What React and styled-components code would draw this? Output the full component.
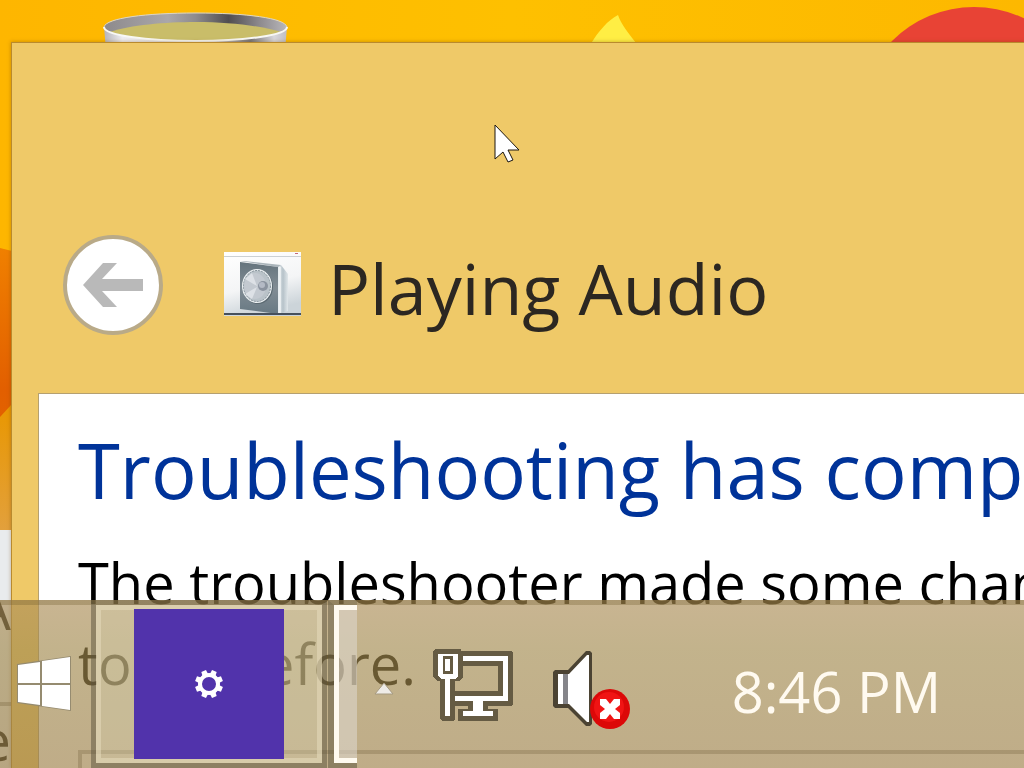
import React from "react";
import styled, { createGlobalStyle } from "styled-components";

const GlobalStyle = createGlobalStyle`
  * {
    box-sizing: border-box;
  }
  body {
    margin: 0;
    overflow: hidden;
    font-family: "Open Sans", "Noto Sans", sans-serif;
  }
  button {
    padding: 0;
    border: 0;
    background: none;
    cursor: pointer;
  }
  svg {
    display: block;
    flex: none;
  }
  h1, h2, p {
    margin: 0;
    font-weight: 400;
    white-space: nowrap;
  }
`;

const Desktop = styled.main`
  position: relative;
  display: flex;
  height: 100vh;
  padding: 42px 0 0 11px;
  overflow: hidden;
  background: linear-gradient(90deg, #feb600, #fec000 50%, #fdb800);
`;

const Wallpaper = styled.svg`
  position: absolute;
  top: 0;
  left: 0;
`;

/* the window that sits behind, only its right edge can be seen */
const BackWindow = styled.div`
  position: absolute;
  top: 530px;
  left: 0;
  bottom: 0;
  width: 11px;
  display: flex;
  flex-direction: column;
  align-items: flex-end;
  padding-top: 50px;
  overflow: hidden;
  font-size: 56px;
  line-height: 56px;
  color: #111;
  background: #e9ebed;
`;

const BackLine = styled.span`
  width: 100%;
  height: 4px;
  margin: 66px 0 5px;
  background: #aaa;
`;

const Window = styled.section`
  position: relative;
  flex: 1;
  min-width: 0;
  display: flex;
  flex-direction: column;
  padding-left: 26px;
  border: solid #b98a2e;
  border-width: 1px 0 0 1px;
  background: #efc968;
  box-shadow: 0 0 4px rgba(110, 70, 0, 0.4);
  overflow: hidden;
`;

const WindowHeader = styled.header`
  flex: none;
  display: flex;
  align-items: center;
  height: 350px;
  padding: 134px 0 0 24px;
`;

const BackButton = styled.button`
  width: 102px;
  height: 102px;
`;

const SpeakerPicture = styled.svg`
  margin: 0 26px 0 60px;
`;

const Title = styled.h1`
  padding-top: 6px;
  font-size: 70px;
  line-height: 100px;
  color: #2c2721;
`;

const Panel = styled.article`
  flex: 1;
  padding: 26px 0 0 39px;
  border: solid #b5a070;
  border-width: 1px 0 0 1px;
  background: #fff;
`;

const Heading = styled.h2`
  font-size: 76px;
  line-height: 100px;
  color: #003399;
`;

const Message = styled.p`
  padding-top: 22px;
  font-size: 56px;
  line-height: 81px;
  color: #000;
`;

const ResultList = styled.div`
  height: 100px;
  margin-top: 46px;
  border: solid #bbb;
  border-width: 4px 0 0 4px;
`;

const Taskbar = styled.footer`
  position: absolute;
  left: 0;
  right: 0;
  bottom: 0;
  display: flex;
  align-items: center;
  height: 168px;
  background: linear-gradient(
    rgba(172, 141, 87, 0.65),
    rgba(162, 138, 78, 0.65) 30%,
    rgba(157, 128, 72, 0.65)
  );
  box-shadow: inset 0 5px 0 rgba(110, 88, 40, 0.3);
`;

const StartButton = styled.button`
  flex: none;
  width: 91px;
  height: 100%;
  padding-left: 17px;
`;

const TaskButton = styled.button`
  flex: none;
  display: flex;
  width: ${(props) => (props.$cut ? "29px" : "236px")};
  height: 100%;
  margin-right: ${(props) => (props.$cut ? "0" : "1px")};
  border: solid rgba(92, 84, 62, 0.5);
  border-width: ${(props) => (props.$cut ? "5px 0 5px 6px" : "5px")};
  border-top-color: rgba(92, 84, 62, 0.3);
  background-clip: padding-box;
`;

const TaskFrame = styled.span`
  flex: 1;
  display: flex;
  align-items: center;
  justify-content: center;
  height: 100%;
  border: solid ${(props) => (props.$cut ? "#fffaf0" : "rgba(226, 216, 185, 0.7)")};
  border-width: ${(props) => (props.$cut ? "5px 0 5px 5px" : "5px")};
  background: ${(props) =>
    props.$cut ? "rgba(220, 214, 204, 0.6)" : "rgba(215, 210, 175, 0.35)"};
  background-clip: padding-box;
`;

const SettingsTile = styled.span`
  flex: none;
  display: flex;
  align-items: center;
  justify-content: center;
  width: 150px;
  height: 150px;
  background: #5133ab;
`;

const Tray = styled.div`
  display: flex;
  align-items: center;
  gap: 39px;
  padding-left: 17px;
`;

const Clock = styled.time`
  margin-left: auto;
  padding: 14px 83px 0 0;
  font-size: 56px;
  line-height: 80px;
  white-space: nowrap;
  color: #fffaf0;
`;

const Cursor = styled.svg`
  position: absolute;
  top: 124px;
  left: 494px;
`;

const WallpaperArt = () => (
  <Wallpaper width="1024" height="768" aria-hidden="true">
    <defs>
      <linearGradient id="rim">
        <stop offset="0" stopColor="#8d8a8c" />
        <stop offset="0.35" stopColor="#aaa7aa" />
        <stop offset="0.5" stopColor="#8e8b8d" />
        <stop offset="0.68" stopColor="#504d50" />
        <stop offset="0.85" stopColor="#8d8a8e" />
        <stop offset="1" stopColor="#b9b7ba" />
      </linearGradient>
      <linearGradient id="wall">
        <stop offset="0" stopColor="#b5b3b8" />
        <stop offset="0.1" stopColor="#eeedf0" />
        <stop offset="0.6" stopColor="#d5d3d6" />
        <stop offset="0.8" stopColor="#77757a" />
        <stop offset="0.93" stopColor="#d9d8dc" />
        <stop offset="1" stopColor="#bfbdc2" />
      </linearGradient>
      <linearGradient id="flame" x1="0" y1="0" x2="0" y2="1">
        <stop offset="0" stopColor="#f08000" />
        <stop offset="0.5" stopColor="#e25f00" />
        <stop offset="1" stopColor="#e46a00" />
      </linearGradient>
      <linearGradient id="sand" x1="0" y1="0" x2="0" y2="1">
        <stop offset="0" stopColor="#e99700" />
        <stop offset="1" stopColor="#e2a03c" />
      </linearGradient>
    </defs>
    <path d="M104 27 L106 50 H285 L287 27Z" fill="url(#wall)" />
    <ellipse cx="195.5" cy="27" rx="91.5" ry="14" fill="url(#rim)" />
    <path
      d="M110 32 C130 25 165 22 196 22 C230 22 262 26 281 32 C255 39 230 41 196 41 C160 41 130 38 110 32Z"
      fill="#c9bd69"
    />
    <path
      d="M104 27 C104 35 146 41 196 41 C246 41 287 35 287 27"
      fill="none"
      stroke="#f8f8f4"
      strokeWidth="2"
    />
    <path
      d="M104 27 C106 18 146 13 196 13 C246 13 285 18 287 27"
      fill="none"
      stroke="#dcd6c8"
      strokeWidth="1"
    />
    <path d="M592 42 C598 32 608 20 618 15 C621 24 629 34 636 43Z" fill="#ffee44" />
    <circle cx="974" cy="123" r="116" fill="#e84335" />
    <path d="M0 248 L12 251 V530 H0Z" fill="url(#flame)" />
    <path d="M0 417 L12 404 V530 H0Z" fill="url(#sand)" />
  </Wallpaper>
);

const BackArrow = () => (
  <svg width="102" height="102" aria-hidden="true">
    <circle cx="51" cy="51" r="48" fill="#fff" stroke="#b9aa88" strokeWidth="4" />
    <path d="M21 51 L41 29 H55 L40 45 H81 V57 H40 L55 73 H41Z" fill="#b9b9b9" />
  </svg>
);

const SpeakerThumb = () => (
  <SpeakerPicture width="78" height="66" aria-hidden="true">
    <defs>
      <linearGradient id="paper" x1="0" y1="0" x2="0.3" y2="1">
        <stop offset="0" stopColor="#ffffff" />
        <stop offset="0.6" stopColor="#f4f5f6" />
        <stop offset="1" stopColor="#ccd4d9" />
      </linearGradient>
      <linearGradient id="front" x1="0" y1="0" x2="0" y2="1">
        <stop offset="0" stopColor="#65747d" />
        <stop offset="0.5" stopColor="#818c94" />
        <stop offset="1" stopColor="#687983" />
      </linearGradient>
      <linearGradient id="side">
        <stop offset="0" stopColor="#edf2f4" />
        <stop offset="0.5" stopColor="#b6c2c9" />
        <stop offset="1" stopColor="#e1e7ea" />
      </linearGradient>
    </defs>
    <rect width="77" height="64" fill="url(#paper)" />
    <rect y="4" width="77" height="1" fill="#cbd0d4" />
    <rect x="71" y="1" width="3" height="1" fill="#c26a7a" />
    <path d="M54 14 L57 13 L64 22 V59 L54 62Z" fill="url(#side)" />
    <path d="M16 9 L20 9 L57 13 L54 15Z" fill="#aab4ba" />
    <path d="M16 10 L54 15 V62 L16 57Z" fill="url(#front)" />
    <path d="M56 15 V61" stroke="#fff" strokeWidth="1" />
    <ellipse cx="34" cy="35" rx="15" ry="17" fill="#5c6a72" />
    <ellipse cx="33" cy="34" rx="15" ry="17" fill="#eef2f4" />
    <ellipse
      cx="33"
      cy="34"
      rx="13.5"
      ry="15.5"
      fill="#b9c2c8"
      stroke="#85929a"
      strokeWidth="1"
      strokeDasharray="2 1"
    />
    <ellipse cx="31" cy="34" rx="11" ry="13" fill="#c3c9d0" />
    <path d="M33 34 L21 27 L28 21Z M33 35 L21 42 L28 47Z" fill="#dde1e6" />
    <circle cx="39" cy="34" r="5" fill="#8b939f" />
    <circle cx="38" cy="33" r="3" fill="#b4bac5" />
    <rect y="61" width="77" height="2" fill="#46505c" />
  </SpeakerPicture>
);

const WindowsLogo = () => (
  <svg width="55" height="56" aria-hidden="true">
    <path d="M0 8 L54 0 V55 L0 47Z" fill="#958b70" />
    <path
      d="M1 9 L23 6 V27 H1Z M25 5 L53 1 V27 H25Z M1 29 H23 V49 L1 46Z M25 29 H53 V54 L25 50Z"
      fill="#fff"
    />
  </svg>
);

const Gear = () => (
  <svg width="30" height="30" viewBox="-15 -15 30 30" aria-hidden="true">
    <circle r="9" fill="none" stroke="#fff" strokeWidth="4" />
    {[0, 1, 2, 3, 4, 5, 6, 7].map((tooth) => (
      <path
        key={tooth}
        d="M-3 -9 L-2.5 -14 H2.5 L3 -9Z"
        fill="#fff"
        transform={`rotate(${tooth * 45 + 22.5})`}
      />
    ))}
  </svg>
);

const ShowHidden = () => (
  <svg width="20" height="90" aria-hidden="true">
    <path d="M10 44 L19 55 H1Z" fill="#eeebe6" stroke="#a69a80" strokeWidth="1" />
  </svg>
);

const NetworkIcon = () => (
  <svg width="81" height="90" shapeRendering="crispEdges" aria-hidden="true">
    <path
      fill="#655b43"
      fillRule="evenodd"
      d="M2 10 H28 V12 H78 L80 14 V65 L78 67 H55 V70 H65 V82 H25 V70 H35 V67 H22 V80 L20 82 H9 L7 80 V42 H4 L0 38 V12Z M30 27 V38 L27 42 H22 V52 H65 V27Z"
    />
    <path d="M30 17 H75 V62 H50 V72 H60 V77 H30 V72 H40 V62 H22 V57 H70 V22 H30Z" fill="#fff" />
    <path d="M5 15 H25 V37 L22 40 H17 V77 H12 V40 H8 L5 37Z" fill="#fff" />
    <path d="M10 17 H20 V35 H10Z M12 20 V32 H17 V20Z" fill="#655b43" fillRule="evenodd" />
  </svg>
);

const VolumeIcon = () => (
  <svg width="78" height="90" aria-hidden="true">
    <path
      d="M2 31 H15 L33 12 H37 L39 14 V85 L37 87 H33 L15 69 H2 L0 67 V33Z"
      fill="#4b4333"
    />
    <path d="M5 35 H16 L34 16 H36 V83 H34 L16 65 H5Z" fill="#fff" />
    <path d="M10 35 H15 V65 H10Z" fill="#85858a" />
    <circle cx="57" cy="70" r="20" fill="#dc0808" />
    <circle cx="56" cy="68" r="15" fill="#f01414" />
    <path
      d="M47 60 H53 L57 65 L61 60 H67 V66 L62 70 L67 74 V80 H61 L57 75 L53 80 H47 V74 L52 70 L47 66Z"
      fill="#fff"
    />
  </svg>
);

export default function App() {
  return (
    <>
      <GlobalStyle />
      <Desktop>
        <WallpaperArt />
        <BackWindow>
          <span>A</span>
          <BackLine />
          <span>e</span>
        </BackWindow>
        <Window>
          <WindowHeader>
            <BackButton aria-label="Back">
              <BackArrow />
            </BackButton>
            <SpeakerThumb />
            <Title>Playing Audio</Title>
          </WindowHeader>
          <Panel>
            <Heading>Troubleshooting has completed</Heading>
            <Message>
              The troubleshooter made some changes
              <br />
              to do before.
            </Message>
            <ResultList />
          </Panel>
        </Window>
        <Taskbar>
          <StartButton aria-label="Start">
            <WindowsLogo />
          </StartButton>
          <TaskButton aria-label="Settings">
            <TaskFrame>
              <SettingsTile>
                <Gear />
              </SettingsTile>
            </TaskFrame>
          </TaskButton>
          <TaskButton $cut aria-label="Playing Audio">
            <TaskFrame $cut />
          </TaskButton>
          <Tray>
            <button aria-label="Show hidden icons">
              <ShowHidden />
            </button>
            <button aria-label="Network">
              <NetworkIcon />
            </button>
            <button aria-label="Volume">
              <VolumeIcon />
            </button>
          </Tray>
          <Clock>8:46 PM</Clock>
        </Taskbar>
        <Cursor width="28" height="42" aria-hidden="true">
          <path
            d="M1 1 V35 L9 28 L14 38 L19 36 L14 26 H25Z"
            fill="#fff"
            stroke="#1c1710"
            strokeWidth="1"
          />
        </Cursor>
      </Desktop>
    </>
  );
}
